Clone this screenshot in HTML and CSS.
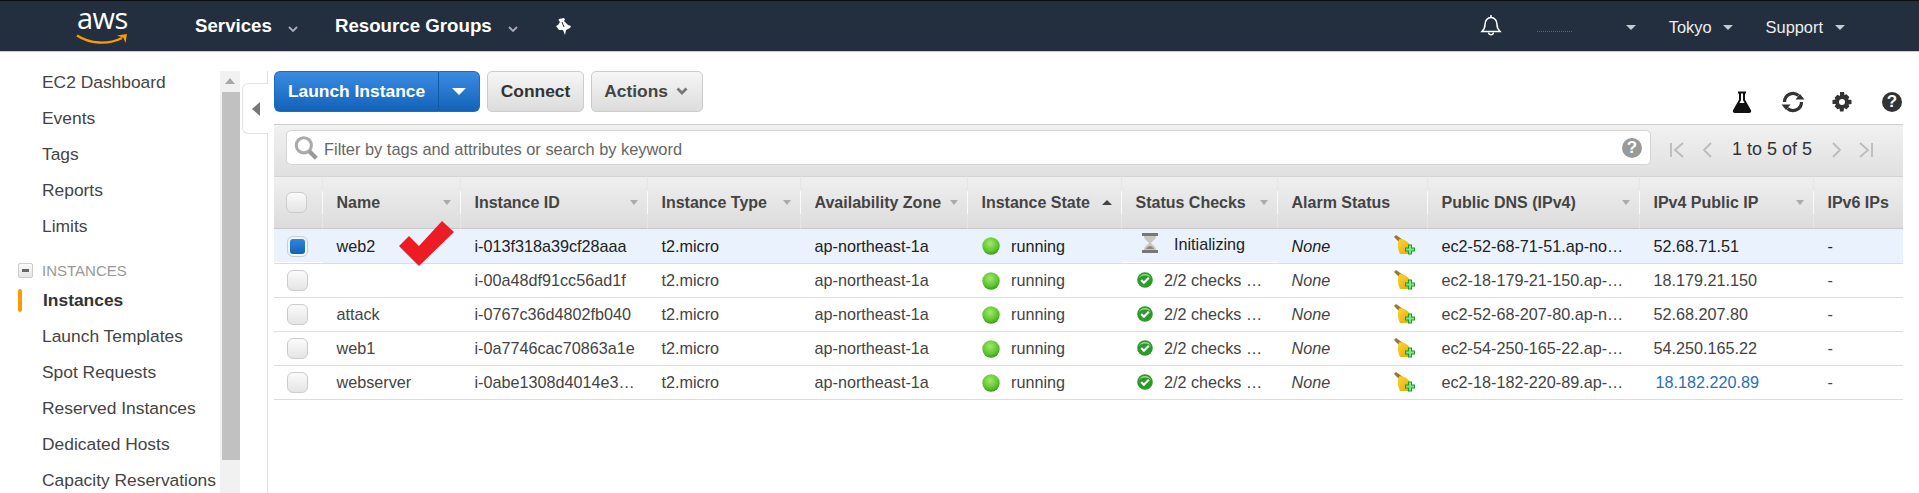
FILE: index.html
```html
<!DOCTYPE html>
<html lang="en">
<head>
    <meta charset="UTF-8">
    <title>EC2 Management Console</title>
    <link rel="stylesheet" href="styles.css">
</head>
<body>

    <svg class="sprites" width="0" height="0">
        <symbol id="dot" viewBox="0 0 18 18">
            <defs>
                <radialGradient id="dotFill" cx="45%" cy="35%" r="65%">
                    <stop offset="0" stop-color="#a4e86a"/>
                    <stop offset="0.7" stop-color="#5cc52e"/>
                    <stop offset="1" stop-color="#3c9a1c"/>
                </radialGradient>
                <linearGradient id="broomFill" x1="0" y1="0" x2="1" y2="1">
                    <stop offset="0" stop-color="#ffd52e"/>
                    <stop offset="1" stop-color="#e0a80f"/>
                </linearGradient>
            </defs>
            <circle cx="9" cy="9" r="8.7" fill="url(#dotFill)"/>
        </symbol>
        <symbol id="ok" viewBox="0 0 16 16">
            <circle cx="8" cy="8" r="7.8" fill="#2c9a2a"/>
            <path d="M2 7a6 5 0 0 1 12 0a6 3.5 0 0 0-12 0z" fill="#9bdc86"/>
            <path d="M4.2 8l2.7 2.7 4.9-5" fill="none" stroke="#fff" stroke-width="2.2"/>
        </symbol>
        <symbol id="broom" viewBox="0 0 21 20">
            <path d="M0 2L2 0l7 5-3 3z" fill="#9a7430"/>
            <path d="M5 4.500c4-1 9 1.500 11.500 7L17 19H6C3.500 14 3 9 5 4.500z" fill="url(#broomFill)"/>
            <path d="M14 9.500h4v3h3v4h-3v3h-4v-3h-3v-4h3z" fill="#1a9a2a"/>
            <path d="M15 10.500h2v3h3v2h-3v3h-2v-3h-3v-2h3z" fill="#7fe58a"/>
        </symbol>
    </svg>

    <header class="topbar">
        <div class="logo">
            <span class="logo-text">aws</span>
            <svg class="logo-smile" width="52" height="12" viewBox="0 0 52 12">
                <path d="M1 1.500C14 10 32 11 46 4" fill="none" stroke="#f90" stroke-width="2.400"/>
                <path d="M41 1.500L51 0l-1.500 9-2-5z" fill="#f90"/>
            </svg>
        </div>
        <a class="nav-link nav-services">Services</a>
        <svg class="chevron" width="10" height="6" viewBox="0 0 10 6"><path d="M1 1l4 4 4-4" fill="none" stroke="#aab" stroke-width="1.800"/></svg>
        <a class="nav-link nav-groups">Resource Groups</a>
        <svg class="chevron" width="10" height="6" viewBox="0 0 10 6"><path d="M1 1l4 4 4-4" fill="none" stroke="#aab" stroke-width="1.800"/></svg>
        <svg class="pin" width="16" height="17" viewBox="0 0 16 17">
            <path d="M4 1l5-1 1 1.500L9 3l4 4 3 1-1 2-4 2-1 5-2-5H4L1 8l2-1 2-3-1.500-2z" fill="#fff"/>
            <path d="M7 4l2 5" stroke="#232f3e" stroke-width="1"/>
        </svg>

        <div class="topbar-right">
            <svg class="bell" width="22" height="22" viewBox="0 0 22 22">
                <path d="M2 17.500c2-2 3-3 3-7 0-4 2.500-7 6-7s6 3 6 7c0 4 1 5 3 7z" fill="none" stroke="#fff" stroke-width="1.500"/>
                <path d="M11 1v2.500M8.500 18.500c.5 3 4.500 3 5 0" fill="none" stroke="#fff" stroke-width="1.500"/>
            </svg>
            <span class="user-blur"></span>
            <span class="caret"></span>
            <span class="region">Tokyo</span>
            <span class="caret"></span>
            <span class="support">Support</span>
            <span class="caret"></span>
        </div>
    </header>

    <div class="layout">
        <nav class="sidebar">
            <a class="side-item">EC2 Dashboard</a>
            <a class="side-item">Events</a>
            <a class="side-item">Tags</a>
            <a class="side-item">Reports</a>
            <a class="side-item">Limits</a>
            <div class="side-section"><span class="side-toggle"></span>INSTANCES</div>
            <a class="side-item active">Instances</a>
            <a class="side-item">Launch Templates</a>
            <a class="side-item">Spot Requests</a>
            <a class="side-item">Reserved Instances</a>
            <a class="side-item">Dedicated Hosts</a>
            <a class="side-item">Capacity Reservations</a>
        </nav>

        <div class="scrollbar">
            <div class="scroll-arrow"></div>
            <div class="scroll-thumb"></div>
        </div>

        <div class="collapse-col">
            <div class="collapse-tab"><span class="collapse-arrow"></span></div>
        </div>

        <main class="main">
            <div class="toolbar">
                <div class="btn-split">
                    <button class="btn-primary">Launch Instance</button>
                    <button class="btn-primary-caret"><span></span></button>
                </div>
                <button class="btn">Connect</button>
                <button class="btn btn-actions">Actions
                    <svg width="12" height="8" viewBox="0 0 12 8"><path d="M1.500 1.500L6 6l4.500-4.500" fill="none" stroke="#777" stroke-width="2.800"/></svg>
                </button>
                <div class="tool-icons">
                    <svg width="22" height="22" viewBox="0 0 22 22">
                        <path d="M7 1.500h8M9 2v7L3 19.500c-.5 1 0 1.500 1 1.500h14c1 0 1.500-.5 1-1.500L13 9V2" fill="none" stroke="#111" stroke-width="2"/>
                        <path d="M7 12h8l4 8H3z" fill="#111"/>
                    </svg>
                    <svg width="26" height="24" viewBox="0 0 26 24">
                        <path d="M4.500 12a8.500 8.500 0 0 1 14-6.500M21.500 12a8.500 8.500 0 0 1-14 6.500" fill="none" stroke="#333" stroke-width="3.200"/>
                        <path d="M15.500 9.500h9l-4.500-5.500zM10.500 14.500h-9l4.500 5.500z" fill="#333"/>
                    </svg>
                    <svg width="20" height="20" viewBox="0 0 20 20">
                        <path d="M8 0h4l.5 3 2-.8 2.800 2.800-1.300 2.500 3.500.5v4l-3 .5.800 2-2.800 2.800-2.500-1.300-.5 3.500H8l-.5-3-2 .8-2.800-2.800 1.300-2.500L.5 12V8l3-.5-.8-2L5.500 2.700 8 4z" fill="#333"/>
                        <circle cx="10" cy="10" r="3" fill="#fff"/>
                    </svg>
                    <span class="help-icon">?</span>
                </div>
            </div>

            <div class="filter-panel">
                <div class="search-box">
                    <svg width="26" height="26" viewBox="0 0 24 24">
                        <circle cx="10" cy="9.500" r="7" fill="none" stroke="#aaa" stroke-width="2.800"/>
                        <path d="M15 15l6.500 6.500" stroke="#999" stroke-width="4"/>
                    </svg>
                    <span class="search-text">Filter by tags and attributes or search by keyword</span>
                    <span class="help-icon help-small">?</span>
                </div>
                <div class="pager">
                    <svg width="16" height="16" viewBox="0 0 16 16"><path d="M2 1v14M14 1L6 8l8 7" fill="none" stroke="#bbb" stroke-width="1.800"/></svg>
                    <svg class="pager-prev" width="12" height="16" viewBox="0 0 12 16"><path d="M10 1L3 8l7 7" fill="none" stroke="#bbb" stroke-width="1.800"/></svg>
                    <span class="pager-text">1 to 5 of 5</span>
                    <svg class="pager-next" width="12" height="16" viewBox="0 0 12 16"><path d="M2 1l7 7-7 7" fill="none" stroke="#bbb" stroke-width="1.800"/></svg>
                    <svg class="pager-last" width="16" height="16" viewBox="0 0 16 16"><path d="M14 1v14M2 1l8 7-8 7" fill="none" stroke="#bbb" stroke-width="1.800"/></svg>
                </div>
            </div>

            <table class="grid">
                <colgroup>
                    <col class="w-check"><col class="w-name"><col class="w-id"><col class="w-type"><col class="w-az">
                    <col class="w-state"><col class="w-status"><col class="w-alarm"><col class="w-dns"><col class="w-ip"><col class="w-v6">
                </colgroup>
                <thead>
                    <tr>
                        <th class="th-check"><span class="check"></span></th>
                        <th><div class="th-in">Name<i class="sort"></i></div></th>
                        <th><div class="th-in">Instance ID<i class="sort"></i></div></th>
                        <th><div class="th-in">Instance Type<i class="sort"></i></div></th>
                        <th><div class="th-in">Availability Zone<i class="sort"></i></div></th>
                        <th><div class="th-in">Instance State<i class="sort up"></i></div></th>
                        <th><div class="th-in">Status Checks<i class="sort"></i></div></th>
                        <th><div class="th-in">Alarm Status</div></th>
                        <th><div class="th-in">Public DNS (IPv4)<i class="sort"></i></div></th>
                        <th><div class="th-in">IPv4 Public IP<i class="sort"></i></div></th>
                        <th class="th-last"><div class="th-in">IPv6 IPs</div></th>
                    </tr>
                </thead>
                <tbody>
                    <tr class="selected">
                        <td class="td-check"><span class="check checked"></span></td>
                        <td>web2</td>
                        <td>i-013f318a39cf28aaa</td>
                        <td>t2.micro</td>
                        <td>ap-northeast-1a</td>
                        <td><div class="cell-icon"><svg class="state-dot"><use href="#dot"/></svg>running</div></td>
                        <td class="td-white"><div class="cell-icon init">
                            <svg width="16" height="20" viewBox="0 0 16 20">
                                <path d="M0 0h16v3H0zM0 17h16v3H0z" fill="#777"/>
                                <path d="M2 3h12c0 4-4 5-5 7 1 2 5 3 5 7H2c0-4 4-5 5-7-1-2-5-3-5-7z" fill="#c8c6c0"/>
                                <path d="M4 16c1-2 3-3 4-3s3 1 4 3z" fill="#8a8880"/>
                            </svg>Initializing</div></td>
                        <td class="none">None<svg class="broom"><use href="#broom"/></svg></td>
                        <td>ec2-52-68-71-51.ap-no…</td>
                        <td>52.68.71.51</td>
                        <td>-</td>
                    </tr>
                    <tr>
                        <td class="td-check"><span class="check"></span></td>
                        <td></td>
                        <td>i-00a48df91cc56ad1f</td>
                        <td>t2.micro</td>
                        <td>ap-northeast-1a</td>
                        <td><div class="cell-icon"><svg class="state-dot"><use href="#dot"/></svg>running</div></td>
                        <td><div class="cell-icon"><svg class="ok-icon"><use href="#ok"/></svg>2/2 checks …</div></td>
                        <td class="none">None<svg class="broom"><use href="#broom"/></svg></td>
                        <td>ec2-18-179-21-150.ap-…</td>
                        <td>18.179.21.150</td>
                        <td>-</td>
                    </tr>
                    <tr>
                        <td class="td-check"><span class="check"></span></td>
                        <td>attack</td>
                        <td>i-0767c36d4802fb040</td>
                        <td>t2.micro</td>
                        <td>ap-northeast-1a</td>
                        <td><div class="cell-icon"><svg class="state-dot"><use href="#dot"/></svg>running</div></td>
                        <td><div class="cell-icon"><svg class="ok-icon"><use href="#ok"/></svg>2/2 checks …</div></td>
                        <td class="none">None<svg class="broom"><use href="#broom"/></svg></td>
                        <td>ec2-52-68-207-80.ap-n…</td>
                        <td>52.68.207.80</td>
                        <td>-</td>
                    </tr>
                    <tr>
                        <td class="td-check"><span class="check"></span></td>
                        <td>web1</td>
                        <td>i-0a7746cac70863a1e</td>
                        <td>t2.micro</td>
                        <td>ap-northeast-1a</td>
                        <td><div class="cell-icon"><svg class="state-dot"><use href="#dot"/></svg>running</div></td>
                        <td><div class="cell-icon"><svg class="ok-icon"><use href="#ok"/></svg>2/2 checks …</div></td>
                        <td class="none">None<svg class="broom"><use href="#broom"/></svg></td>
                        <td>ec2-54-250-165-22.ap-…</td>
                        <td>54.250.165.22</td>
                        <td>-</td>
                    </tr>
                    <tr>
                        <td class="td-check"><span class="check"></span></td>
                        <td>webserver</td>
                        <td>i-0abe1308d4014e3…</td>
                        <td>t2.micro</td>
                        <td>ap-northeast-1a</td>
                        <td><div class="cell-icon"><svg class="state-dot"><use href="#dot"/></svg>running</div></td>
                        <td><div class="cell-icon"><svg class="ok-icon"><use href="#ok"/></svg>2/2 checks …</div></td>
                        <td class="none">None<svg class="broom"><use href="#broom"/></svg></td>
                        <td>ec2-18-182-220-89.ap-…</td>
                        <td><a class="ip-link">18.182.220.89</a></td>
                        <td>-</td>
                    </tr>
                </tbody>
            </table>
        </main>
    </div>

    <!-- red tick drawn over the screenshot -->
    <svg class="red-tick" width="60" height="50" viewBox="0 0 60 50">
        <path d="M3 25l10-10 10 10 23-25 12 11-35 34z" fill="#ed1c24"/>
    </svg>

</body>
</html>
```

FILE: styles.css
```css
* {
    box-sizing: border-box;
}

html, body {
    height: 100%;
}

body {
    margin: 0;
    font-family: "Liberation Sans", Arial, sans-serif;
    background-color: #fff;
    color: #444;
    overflow: hidden;
    position: relative;
}

.sprites {
    position: absolute;
}

/* top bar */
.topbar {
    display: flex;
    align-items: center;
    height: 52px;
    padding-left: 76px;
    background-color: #232f3e;
    border-top: 1px solid #0b0f14;
    border-bottom: 1px solid #c4cad0;
}

.logo {
    display: flex;
    flex-direction: column;
    width: 52px;
}

.logo-text {
    font-family: "Open Sans", sans-serif;
    font-size: 29px;
    line-height: 24px;
    letter-spacing: -0.5px;
    color: #fff;
    padding-left: 1px;
}

.logo-smile {
    margin-top: 4px;
}

.nav-link {
    font-size: 18.7px;
    font-weight: bold;
    color: #fff;
}

.nav-services {
    margin-left: 67px;
}

.nav-groups {
    margin-left: 37px;
}

.chevron {
    margin: 5px 0 0 16px;
}

.pin {
    margin-left: 37px;
}

.topbar-right {
    display: flex;
    align-items: center;
    margin-left: auto;
    padding-top: 3px;
    color: #eee;
    font-size: 16.400px;
}

.bell {
    margin: 0 0 6px 0;
}

.user-blur {
    width: 35px;
    height: 8px;
    margin-left: 35px;
    border-bottom: 1px dotted #5a6673;
}

.caret {
    width: 0;
    height: 0;
    border-left: 5.500px solid transparent;
    border-right: 5.500px solid transparent;
    border-top: 5.500px solid #c8ccd0;
    margin-left: 12px;
}

.user-blur + .caret {
    margin-left: 54px;
}

.region {
    margin-left: 33px;
}

.region + .caret {
    margin-left: 11px;
}

.support {
    margin-left: 33px;
}

.topbar-right .caret:last-child {
    margin-right: 74px;
}

/* page below the bar */
.layout {
    display: flex;
    height: calc(100% - 52px);
}

.sidebar {
    width: 220px;
    flex-shrink: 0;
    display: flex;
    flex-direction: column;
    padding-top: 12px;
}

.side-item {
    display: block;
    height: 36px;
    line-height: 36px;
    padding-left: 42px;
    font-size: 17.400px;
    white-space: nowrap;
    color: #444;
    position: relative;
    flex-shrink: 0;
}

.side-item.active {
    font-weight: bold;
    color: #333;
    padding-left: 43px;
}

.side-item.active::before {
    content: "";
    position: absolute;
    left: 18px;
    top: 7px;
    width: 4px;
    height: 23px;
    border-radius: 2px;
    background-color: #f90;
}

.side-section {
    display: flex;
    align-items: center;
    height: 16px;
    margin: 18px 0 4px 18px;
    font-size: 15px;
    color: #999;
    flex-shrink: 0;
}

.side-toggle {
    width: 15px;
    height: 15px;
    margin-right: 9px;
    border: 1px solid #ccc;
    border-radius: 2px;
    background: linear-gradient(#fafafa, #e4e4e4);
    position: relative;
}

.side-toggle::after {
    content: "";
    position: absolute;
    left: 3px;
    top: 5px;
    width: 7px;
    height: 3px;
    background-color: #666;
}

.scrollbar {
    width: 20px;
    flex-shrink: 0;
    margin-top: 19px;
    background-color: #f1f1f1;
}

.scroll-arrow {
    height: 21px;
    position: relative;
}

.scroll-arrow::after {
    content: "";
    position: absolute;
    left: 5px;
    top: 7px;
    border-left: 5px solid transparent;
    border-right: 5px solid transparent;
    border-bottom: 6px solid #a8a8a8;
}

.scroll-thumb {
    height: 368px;
    margin: 0 0 0 2px;
    background-color: #c1c1c1;
}

.collapse-col {
    width: 28px;
    flex-shrink: 0;
    margin-top: 19px;
    padding: 12px 0 0 2px;
    border-right: 1px solid #ddd;
}

.collapse-tab {
    display: flex;
    align-items: center;
    justify-content: center;
    width: 26px;
    height: 51px;
    margin-right: -1px;
    background-color: #fff;
    border: 1px solid #e4e4e4;
    border-right: 0;
    border-radius: 6px 0 0 6px;
}

.collapse-arrow {
    border-top: 7px solid transparent;
    border-bottom: 7px solid transparent;
    border-right: 8px solid #777;
}

.main {
    flex: 1;
    min-width: 0;
    padding: 19px 16px 0 6px;
}

/* buttons row */
.toolbar {
    display: flex;
    align-items: flex-start;
    height: 53px;
}

.btn-split {
    display: flex;
}

.btn-primary, .btn-primary-caret, .btn {
    height: 41px;
    font-family: inherit;
    font-size: 17.400px;
    font-weight: bold;
    padding: 0;
}

.btn-primary, .btn-primary-caret {
    color: #fff;
    background: linear-gradient(#3a8be2, #1263b8);
    border: 1px solid #1b6cc2;
}

.btn-primary {
    width: 165px;
    border-radius: 6px 0 0 6px;
    border-right-color: #0f5aa8;
}

.btn-primary-caret {
    width: 41px;
    border-left: 0;
    border-radius: 0 6px 6px 0;
    display: flex;
    align-items: center;
    justify-content: center;
}

.btn-primary-caret span {
    border-left: 7px solid transparent;
    border-right: 7px solid transparent;
    border-top: 7px solid #fff;
}

.btn {
    width: 97px;
    margin-left: 7px;
    color: #333;
    background: linear-gradient(#f6f6f6, #dcdcdc);
    border: 1px solid #ccc;
    border-radius: 5px;
}

.btn-actions {
    width: 112px;
    padding-right: 2px;
    color: #444;
}

.btn-actions svg {
    margin-left: 3px;
    vertical-align: 2px;
}

.tool-icons {
    display: flex;
    align-items: center;
    margin-left: auto;
    height: 24px;
    margin-top: 19px;
}

.tool-icons svg:nth-child(2) {
    margin-left: 27px;
}

.tool-icons svg:nth-child(3) {
    margin-left: 26px;
}

.help-icon {
    display: block;
    width: 20px;
    height: 20px;
    margin-left: 30px;
    margin-right: 1px;
    border-radius: 50%;
    background-color: #333;
    color: #fff;
    font-size: 17px;
    font-weight: bold;
    line-height: 20px;
    text-align: center;
}

/* filter row */
.filter-panel {
    display: flex;
    height: 52px;
    padding: 5px 0 0 12px;
    background: linear-gradient(#f1f1f1, #e0e0e0);
    border-top: 1px solid #ccc;
}

.search-box {
    display: flex;
    align-items: center;
    width: 1365px;
    height: 35px;
    padding-left: 6px;
    background-color: #fff;
    border: 1px solid #d4d4d4;
    border-radius: 5px;
}

.search-text {
    margin-left: 5px;
    padding-top: 3px;
    font-size: 16.400px;
    color: #666;
}

.help-small {
    margin-left: auto;
    margin-right: 8px;
    margin-top: 1px;
    background-color: #999;
}

.pager {
    display: flex;
    align-items: center;
    height: 35px;
    margin-top: 2px;
    padding-left: 18px;
}

.pager-prev {
    margin-left: 16px;
}

.pager-text {
    margin: 0 19px 0 19px;
    font-size: 18px;
    color: #333;
}

.pager-last {
    margin-left: 15px;
}

/* instances table */
.grid {
    width: 1629px;
    table-layout: fixed;
    border-collapse: separate;
    border-spacing: 0;
    font-size: 16.200px;
}

.w-check { width: 49px; }
.w-name { width: 138px; }
.w-id { width: 187px; }
.w-type { width: 153px; }
.w-az { width: 167px; }
.w-state { width: 154px; }
.w-status { width: 156px; }
.w-alarm { width: 150px; }
.w-dns { width: 212px; }
.w-ip { width: 174px; }
.w-v6 { width: 89px; }

.grid th {
    height: 53px;
    padding: 0;
    text-align: left;
    font-size: 16px;
    color: #444;
    background: linear-gradient(#efefef, #dcdcdc);
    border-top: 1px solid #d4d4d4;
    border-bottom: 1px solid #c8c8c8;
    border-right: 1px solid #e6e6e6;
    position: relative;
}

.grid th::after {
    content: "";
    position: absolute;
    right: -1px;
    top: 14px;
    height: 23px;
    width: 1px;
    background-color: #fafafa;
}

.grid th.th-last {
    border-right: 0;
}

.grid th.th-last::after {
    display: none;
}

.th-in {
    display: flex;
    align-items: center;
    justify-content: space-between;
    padding: 0 9px 0 13.500px;
    white-space: nowrap;
}

.sort {
    border-left: 4.500px solid transparent;
    border-right: 4.500px solid transparent;
    border-top: 5px solid #aaa;
}

.sort.up {
    border-top: 0;
    border-left-width: 5px;
    border-right-width: 5px;
    border-bottom: 5px solid #444;
}

.th-check {
    padding-left: 12px !important;
}

.grid td {
    height: 34px;
    padding: 0 0 0 13.500px;
    border-bottom: 1px solid #ddd;
    white-space: nowrap;
    overflow: hidden;
    position: relative;
}

.grid tbody tr:first-child td {
    height: 35px;
}

.selected td {
    background-color: #e9f2fd;
    color: #222;
    border-bottom-color: #d8dde2;
}

.grid td.td-white {
    box-shadow: inset 0 -1px #fff;
}

.grid td.td-check {
    padding-left: 13px;
}

.selected .td-check {
    box-shadow: inset 0 -1px #fff;
}

.check {
    display: block;
    width: 21px;
    height: 21px;
    border: 1px solid #ccc;
    border-radius: 6px;
    background: linear-gradient(#fbfbfb, #e4e4e4);
}

.check.checked {
    padding: 2px;
    background: #f4f4f4;
}

.check.checked::before {
    content: "";
    display: block;
    width: 15px;
    height: 15px;
    border-radius: 3px;
    background: linear-gradient(#2f86dd, #1463b6);
}

.cell-icon {
    display: flex;
    align-items: center;
}

.state-dot {
    width: 18px;
    height: 18px;
    margin: 0 11px 0 0.500px;
}

.ok-icon {
    width: 16px;
    height: 16px;
    margin: 0 11px 2px 1.500px;
}

.init svg {
    margin: 0 16px 4px 6.500px;
}

.init {
    margin-top: -3px;
}

.none {
    font-style: italic;
}

.broom {
    position: absolute;
    left: 116px;
    top: 6px;
    width: 21px;
    height: 20px;
}

.ip-link {
    color: #2a6ebb;
    margin-left: 2px;
}

.red-tick {
    position: absolute;
    left: 396px;
    top: 221px;
}
```
